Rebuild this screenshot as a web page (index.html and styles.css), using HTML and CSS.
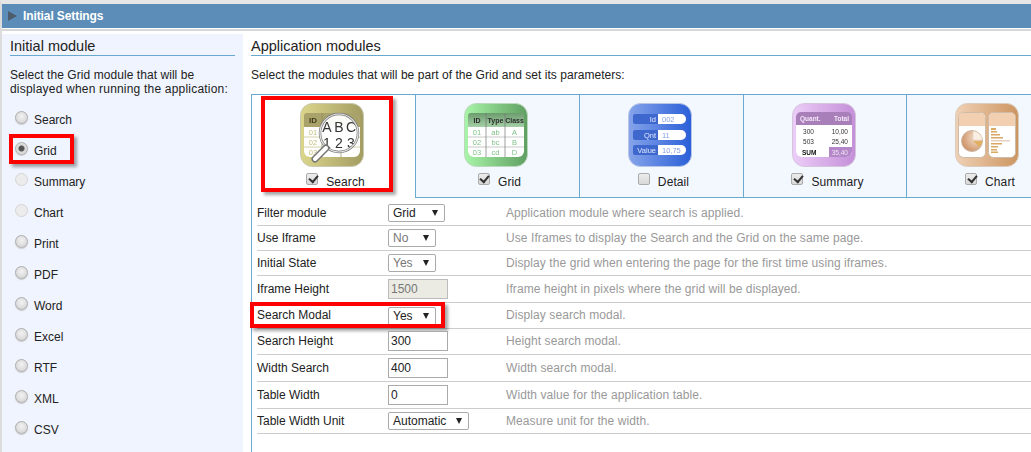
FILE: index.html
```html
<!DOCTYPE html>
<html lang="en">
<head>
<meta charset="utf-8">
<title>Initial Settings</title>
<link rel="stylesheet" href="styles.css">
</head>
<body>
<div class="app">
  <header class="header"><span class="header-arrow"></span><span class="header-title">Initial Settings</span></header>
  <div class="main">
    <aside class="side">
      <h2 class="side-title">Initial module</h2>
      <p class="side-text"><span class="line-a">Select the Grid module that will be</span><span class="line-b">displayed when running the application:</span></p>
      <div class="radios">
        <label class="radio-row"><input class="radio" type="radio" name="m"><span>Search</span></label>
        <label class="radio-row"><input class="radio" type="radio" name="m" checked><span>Grid</span><i class="mark mark-grid"></i></label>
        <label class="radio-row"><input class="radio" type="radio" name="m" disabled><span>Summary</span></label>
        <label class="radio-row"><input class="radio" type="radio" name="m" disabled><span>Chart</span></label>
        <label class="radio-row"><input class="radio" type="radio" name="m"><span>Print</span></label>
        <label class="radio-row"><input class="radio" type="radio" name="m"><span>PDF</span></label>
        <label class="radio-row"><input class="radio" type="radio" name="m"><span>Word</span></label>
        <label class="radio-row"><input class="radio" type="radio" name="m"><span>Excel</span></label>
        <label class="radio-row"><input class="radio" type="radio" name="m"><span>RTF</span></label>
        <label class="radio-row"><input class="radio" type="radio" name="m"><span>XML</span></label>
        <label class="radio-row"><input class="radio" type="radio" name="m"><span>CSV</span></label>
      </div>
    </aside>
    <section class="content">
      <h2 class="content-title">Application modules</h2>
      <p class="content-text">Select the modules that will be part of the Grid and set its parameters:</p>
      <div class="tabs">
        <div class="tab tab-active">
          <svg class="ico" viewBox="0 0 64 64">
            <defs><linearGradient id="gs" x1="0" x2="1"><stop offset="0" stop-color="#dcd68c"/><stop offset="1" stop-color="#a39c62"/></linearGradient>
            <clipPath id="lens"><circle cx="39" cy="30" r="19"/></clipPath></defs>
            <rect x=".5" y=".5" width="63" height="63" rx="12" fill="url(#gs)" stroke="#c9c9b0"/>
            <path d="M4 13a3 3 0 0 1 3-3h50a3 3 0 0 1 3 3v11H4z" fill="#a9a26b"/>
            <path d="M4 24h56v24a6 6 0 0 1-6 6H10a6 6 0 0 1-6-6z" fill="#fff"/>
            <path d="M4 34h56M4 44h56" stroke="#d5d2a8"/><path d="M22 10v44M41 10v44" stroke="#8f8a5c" stroke-width=".7"/>
            <text x="13" y="20" class="t-head" text-anchor="middle" fill="#3e3a1c">ID</text>
            <g class="t-cell" fill="#c5bf7c" text-anchor="middle"><text x="13" y="32">01</text><text x="13" y="42">02</text><text x="13" y="52">03</text></g>
            <circle cx="39" cy="30" r="19" fill="#fff" fill-opacity=".94"/>
            <g clip-path="url(#lens)" class="t-big" fill="#333" text-anchor="middle">
              <text x="27" y="29">A</text><text x="39" y="29">B</text><text x="51" y="29">C</text>
              <text x="27" y="45">1</text><text x="39" y="45">2</text><text x="51" y="45">3</text>
            </g>
            <circle cx="39" cy="30" r="19" fill="none" stroke="#777" stroke-width="2.500"/>
            <circle cx="39" cy="30" r="19" fill="none" stroke="#e6e6e6" stroke-width="1.200"/>
            <path d="M26 45 15 56" stroke="#777" stroke-width="7" stroke-linecap="round"/>
            <path d="M26 45 15 56" stroke="#fff" stroke-width="4" stroke-linecap="round"/>
          </svg>
          <label class="tab-label"><input class="check" type="checkbox" checked><span>Search</span></label>
        </div>
        <div class="tab">
          <svg class="ico" viewBox="0 0 64 64">
            <defs><linearGradient id="gg" x1="0" x2="1"><stop offset="0" stop-color="#a8f5a8"/><stop offset="1" stop-color="#5f9f62"/></linearGradient>
            <linearGradient id="gh" x1="0" x2="0" y1="0" y2="1"><stop offset="0" stop-color="#6c9c6e"/><stop offset="1" stop-color="#a5cfa6"/></linearGradient></defs>
            <rect x=".5" y=".5" width="63" height="63" rx="12" fill="url(#gg)" stroke="#bcd8bc"/>
            <path d="M4 13a3 3 0 0 1 3-3h50a3 3 0 0 1 3 3v11H4z" fill="url(#gh)"/>
            <path d="M4 24h56v24a6 6 0 0 1-6 6H10a6 6 0 0 1-6-6z" fill="#fff"/>
            <path d="M4 34h56M4 44h56" stroke="#c9c9c9"/><path d="M22 10v44M41 10v44" stroke="#777" stroke-width=".7"/>
            <g class="t-grid" text-anchor="middle" fill="#2d2d2d"><text x="13" y="20">ID</text><text x="31.500" y="20">Type</text><text x="50.500" y="20">Class</text></g>
            <g class="t-cell" fill="#7fc287" text-anchor="middle">
              <text x="13" y="32">01</text><text x="31.500" y="32">ab</text><text x="50.500" y="32">A</text>
              <text x="13" y="42">02</text><text x="31.500" y="42">bc</text><text x="50.500" y="42">B</text>
              <text x="13" y="52">03</text><text x="31.500" y="52">cd</text><text x="50.500" y="52">D</text>
            </g>
          </svg>
          <label class="tab-label"><input class="check" type="checkbox" checked><span>Grid</span></label>
        </div>
        <div class="tab">
          <svg class="ico" viewBox="0 0 64 64">
            <defs><linearGradient id="gd" x1="0" x2="1"><stop offset="0" stop-color="#86a4ea"/><stop offset="1" stop-color="#2a5fd8"/></linearGradient></defs>
            <rect x=".5" y=".5" width="63" height="63" rx="12" fill="url(#gd)" stroke="#b7c6e6"/>
            <g fill="#3f68cf"><rect x="5" y="11" width="28" height="10" rx="2"/><rect x="5" y="27" width="28" height="10" rx="2"/><rect x="5" y="42" width="28" height="10" rx="2"/></g>
            <g fill="#fff"><path d="M30 11h23a5 5 0 0 1 0 10H30z"/><path d="M30 27h23a5 5 0 0 1 0 10H30z"/><path d="M30 42h23a5 5 0 0 1 0 10H30z"/></g>
            <g class="t-cell" fill="#dfe7fb" text-anchor="end"><text x="28" y="19">Id</text><text x="28" y="35">Qnt</text><text x="28" y="50">Value</text></g>
            <g class="t-cell" fill="#86a0e6"><text x="34" y="19">002</text><text x="34" y="35">11</text><text x="34" y="50">10,75</text></g>
          </svg>
          <label class="tab-label"><input class="check" type="checkbox"><span>Detail</span></label>
        </div>
        <div class="tab tab-sum">
          <svg class="ico" viewBox="0 0 64 64">
            <defs><linearGradient id="gu" x1="0" x2="1"><stop offset="0" stop-color="#eccdf8"/><stop offset="1" stop-color="#c48fd8"/></linearGradient></defs>
            <rect x=".5" y=".5" width="63" height="63" rx="12" fill="url(#gu)" stroke="#d5c5dc"/>
            <path d="M4 14a5 5 0 0 1 5-5h46a5 5 0 0 1 5 5v8H4z" fill="#a97fba"/>
            <path d="M4 22h56v26a6 6 0 0 1-6 6H10a6 6 0 0 1-6-6z" fill="#fff"/>
            <path d="M37 44h23v4a6 6 0 0 1-6 6H37z" fill="#b487c8"/>
            <g class="t-sum-head" fill="#f3e7f8"><text x="8" y="18">Quant.</text><text x="57" y="18" text-anchor="end">Total</text></g>
            <g class="t-sum" fill="#333"><text x="16.500" y="31" text-anchor="middle">300</text><text x="56" y="31" text-anchor="end">10,00</text><text x="16.500" y="41" text-anchor="middle">503</text><text x="56" y="41" text-anchor="end">25,40</text></g>
            <text x="10" y="51.500" class="t-sum-head" fill="#111">SUM</text>
            <text x="56" y="51.500" class="t-sum" text-anchor="end" fill="#efe3f5">35,40</text>
          </svg>
          <label class="tab-label"><input class="check" type="checkbox" checked><span>Summary</span></label>
        </div>
        <div class="tab tab-last">
          <svg class="ico" viewBox="0 0 64 64">
            <defs><linearGradient id="gc" x1="0" x2="1"><stop offset="0" stop-color="#f0d1b6"/><stop offset="1" stop-color="#cc9560"/></linearGradient>
            <radialGradient id="gp" cx=".7" cy=".35" r=".8"><stop offset="0" stop-color="#f6e2d0"/><stop offset="1" stop-color="#c98a5c"/></radialGradient></defs>
            <rect x=".5" y=".5" width="63" height="63" rx="12" fill="url(#gc)" stroke="#d9cdbf"/>
            <rect x="3.500" y="9.500" width="27" height="45" rx="5" fill="#fff" stroke="#cdbba8"/>
            <rect x="33.500" y="9.500" width="27" height="45" rx="5" fill="#fff" stroke="#cdbba8"/>
            <path d="M4 23v-9a4 4 0 0 1 4-4h18a4 4 0 0 1 4 4v9zM34 23v-9a4 4 0 0 1 4-4h18a4 4 0 0 1 4 4v9z" fill="#f2cfb0"/>
            <circle cx="17" cy="38" r="10.500" fill="url(#gp)" stroke="#cbb9a8"/>
            <path d="M18 28a10 10 0 0 1 9.500 9H18z" fill="#fbeee2" stroke="#d9c8b4" stroke-width=".5"/>
            <path d="M18 38h9.500a10 10 0 0 1-3 6z" fill="#e0b060"/>
            <g fill="#d9a862"><rect x="36" y="25" width="5" height="2"/><rect x="36" y="28" width="6" height="1.500"/><rect x="36" y="31" width="9" height="1.500"/><rect x="36" y="34" width="12" height="1.500"/><rect x="36" y="40" width="11" height="1.500"/><rect x="36" y="43" width="7" height="1.500"/><rect x="36" y="46" width="6" height="1.500"/><rect x="36" y="48.500" width="7" height="1.500"/></g>
            <rect x="36" y="37" width="19" height="1.500" fill="#e8d0c0"/>
          </svg>
          <label class="tab-label"><input class="check" type="checkbox" checked><span>Chart</span></label>
        </div>
        <i class="mark mark-tab"></i>
      </div>
      <div class="params">
        <div class="row row-first"><div class="row-label">Filter module</div><div class="row-field"><div class="select select-filter">Grid</div></div><div class="row-help">Application module where search is applied.</div></div>
        <div class="row"><div class="row-label">Use Iframe</div><div class="row-field"><div class="select select-muted">No</div></div><div class="row-help">Use Iframes to display the Search and the Grid on the same page.</div></div>
        <div class="row"><div class="row-label">Initial State</div><div class="row-field"><div class="select select-muted">Yes</div></div><div class="row-help">Display the grid when entering the page for the first time using iframes.</div></div>
        <div class="row row-tall"><div class="row-label">Iframe Height</div><div class="row-field"><input class="input input-off" value="1500" disabled></div><div class="row-help">Iframe height in pixels where the grid will be displayed.</div></div>
        <div class="row row-mid"><div class="row-label">Search Modal</div><div class="row-field"><div class="select select-low">Yes</div></div><div class="row-help">Display search modal.</div><i class="mark mark-row"></i></div>
        <div class="row row-mid"><div class="row-label">Search Height</div><div class="row-field"><input class="input" value="300"></div><div class="row-help">Height search modal.</div></div>
        <div class="row row-tall"><div class="row-label">Width Search</div><div class="row-field"><input class="input" value="400"></div><div class="row-help">Width search modal.</div></div>
        <div class="row row-tall"><div class="row-label">Table Width</div><div class="row-field"><input class="input" value="0"></div><div class="row-help">Width value for the application table.</div></div>
        <div class="row"><div class="row-label">Table Width Unit</div><div class="row-field"><div class="select select-unit">Automatic</div></div><div class="row-help">Measure unit for the width.</div></div>
      </div>
    </section>
  </div>
</div>
</body>
</html>
```
FILE: styles.css
```css
html, body { margin: 0; height: 452px; overflow: hidden; background: #fff; }
body { font: 12px/14px "Liberation Sans", Arial, sans-serif; color: #222; }
* { box-sizing: border-box; }
.app { height: 452px; display: flex; flex-direction: column; border-top: 4px solid #e6e6e6; border-left: 2px solid #dcdcdc; }
.header { height: 24px; flex: none; background: #5b8db8; display: flex; align-items: center; padding-left: 6px; }
.header-arrow { width: 0; height: 0; border-left: 9px solid #4d5d6b; border-top: 5px solid transparent; border-bottom: 5px solid transparent; margin-right: 6px; }
.header-title { color: #fff; font-weight: 700; font-size: 12px; letter-spacing: -.1px; }
.main { flex: 1; display: flex; min-height: 0; padding-top: 3px; border-top: 2px solid #d8d8d8; margin-top: 1px; }
.side { width: 241px; flex: none; background: #f0f4fe; padding: 4px 8px 0 8px; }
.side-title, .content-title { margin: 0; font-weight: 400; font-size: 14.500px; line-height: 17px; color: #222; border-bottom: 1px solid #6aa9cf; height: 18px; }
.side-text { margin: 12px 0 0; }
.line-a, .line-b { display: block; white-space: nowrap; }
.line-a { letter-spacing: .06px; }
.line-b { letter-spacing: .2px; }
.radios { display: flex; flex-direction: column; margin-top: 8px; }
.radio-row { position: relative; height: 31px; display: flex; align-items: center; gap: 6px; padding-left: 5px; }
.radio { appearance: none; width: 13px; height: 13px; margin: 0 0 4px; border-radius: 50%; border: 1px solid #adadad; background: radial-gradient(circle at 50% 40%, #f2f2f2, #cfcfcf); box-shadow: 0 1px 1px #ccc; flex: none; }
.radio:checked { background: radial-gradient(circle, #555 0 2.500px, #d6d6d6 3.500px, #eee); }
.radio:disabled { border-color: #d4d4d4; background: #ececec; box-shadow: none; }
.mark { position: absolute; border: 4px solid #f00; box-shadow: 3px 3px 3px rgba(0, 0, 0, .35); pointer-events: none; }
.mark-grid { left: -1px; top: -1px; width: 65px; height: 30px; }
.content { flex: 1; min-width: 0; padding: 4px 0 0 8px; overflow: hidden; }
.content-text { margin: 12px 0 0; letter-spacing: .04px; white-space: nowrap; }
.tabs { position: relative; margin-top: 12px; height: 104px; display: flex; border-top: 1px solid #6aa9cf; border-bottom: 1px solid #6aa9cf; }
.tab { width: 164px; flex: none; background: #f3f7fe; border-right: 1px solid #6aa9cf; display: flex; flex-direction: column; align-items: center; padding: 8px 3px 0 0; }
.tab-active { width: 165px; background: #fff; border-left: 1px solid #6aa9cf; margin-bottom: -1px; }
.tab-sum { width: 163px; padding-right: 2px; }
.tab-last { width: 162px; border-right: 0; }
.ico { width: 64px; height: 64px; display: block; flex: none; filter: blur(.3px); }
.ico text { font-family: "Liberation Sans", Arial, sans-serif; }
.t-head { font-size: 8px; font-weight: 700; }
.t-grid { font-size: 7px; font-weight: 700; }
.t-cell { font-size: 7.500px; }
.t-big { font-size: 14px; }
.t-sum { font-size: 6.500px; }
.t-sum-head { font-size: 6.500px; font-weight: 700; }
.tab-label { display: flex; align-items: center; gap: 8px; margin: 8px 0 0 7px; letter-spacing: .1px; }
.check { appearance: none; width: 12px; height: 12px; margin: -6px 0 0; border: 1px solid #ababab; border-radius: 2px; background: linear-gradient(#ececec, #d8d8d8); position: relative; flex: none; }
.check:checked::after { content: ""; position: absolute; left: 1.500px; top: .5px; width: 7px; height: 4px; border-left: 2px solid #333; border-bottom: 2px solid #333; transform: rotate(-50deg); }
.mark-tab { left: 10px; top: 1px; width: 132px; height: 96px; }
.params { border-left: 1px solid #6aa9cf; padding-left: 5px; height: 260px; display: flex; flex-direction: column; }
.row { position: relative; display: flex; align-items: center; height: 25px; flex: none; border-bottom: 1px solid #ccc; }
.row-first { height: 28px; padding-top: 2px; }
.row-tall { height: 27px; }
.row-mid { height: 26px; padding-bottom: 2px; }
.row-label { width: 131px; flex: none; }
.row-field { width: 118px; flex: none; display: flex; }
.row-help { color: #999; letter-spacing: .08px; white-space: nowrap; }
.select { position: relative; height: 18px; width: 48px; border: 1px solid #aaa; border-radius: 2px; background: #fff; line-height: 16px; padding-left: 4px; }
.select::after { content: ""; position: absolute; right: 6px; top: 5px; border-left: 3px solid transparent; border-right: 3px solid transparent; border-top: 6px solid #222; }
.select-muted { color: #777; }
.select-low { margin-top: 3px; }
.select-filter { width: 57px; }
.select-unit { width: 81px; }
.input { width: 60px; height: 20px; border: 1px solid #aaa; padding: 0 2px; font: inherit; color: #222; background: #fff; outline: 0; }
.input-off { background: #ebebe4; color: #777; border-color: #bbb; }
.mark-row { left: -7px; top: -1px; width: 195px; height: 26px; }
```
